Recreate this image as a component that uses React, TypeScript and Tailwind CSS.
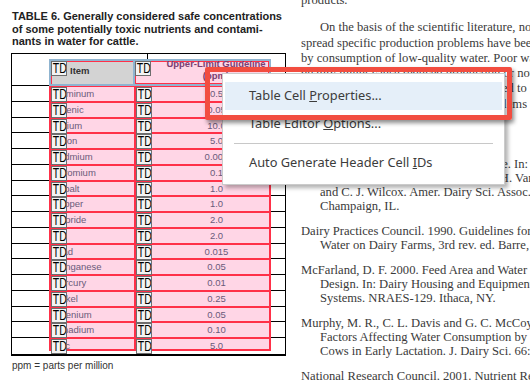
import { Fragment } from 'react'

const items: [string, string][] = [
  ['Aluminum', '0.5'],
  ['Arsenic', '0.05'],
  ['Barium', '10.0'],
  ['Boron', '5.0'],
  ['Cadmium', '0.005'],
  ['Chromium', '0.1'],
  ['Cobalt', '1.0'],
  ['Copper', '1.0'],
  ['Fluoride', '2.0'],
  ['', '2.0'],
  ['Lead', '0.015'],
  ['Manganese', '0.05'],
  ['Mercury', '0.01'],
  ['Nickel', '0.25'],
  ['Selenium', '0.05'],
  ['Vanadium', '0.10'],
  ['Zinc', '5.0'],
]

const paragraph = [
  'On the basis of the scientific literature, no wide-',
  'spread specific production problems have been',
  'by consumption of low-quality water. Poor water',
  'quality might cause reduced production or not',
  'directly, but more research may be needed to mitigate',
  'the effects of water quality on herd problems and',
  'in cattle.',
]

const refs: { first: string; rest: string[] }[] = [
  {
    first: 'Beede, D. K. 1992. Water for dairy cattle. In:',
    rest: ['Large Dairy Herd Management. H. H. Van Horn', 'and C. J. Wilcox. Amer. Dairy Sci. Assoc.', 'Champaign, IL.'],
  },
  {
    first: 'Dairy Practices Council. 1990. Guidelines for',
    rest: ['Water on Dairy Farms, 3rd rev. ed. Barre, VT.'],
  },
  {
    first: 'McFarland, D. F. 2000. Feed Area and Water',
    rest: ['Design. In: Dairy Housing and Equipment', 'Systems. NRAES-129. Ithaca, NY.'],
  },
  {
    first: 'Murphy, M. R., C. L. Davis and G. C. McCoy. 1983.',
    rest: ['Factors Affecting Water Consumption by Holstein', 'Cows in Early Lactation. J. Dairy Sci. 66:35.'],
  },
  {
    first: 'National Research Council. 2001. Nutrient Requirements',
    rest: [],
  },
]

// little "TD" tag badge drawn at the top-left of each tagged cell
function Tag() {
  return (
    <div className="absolute left-0 top-0 z-10 h-[15px] w-[16px] overflow-hidden border border-[#6e6e6e] bg-[#f4f4f4] font-['Liberation_Sans',Arial,sans-serif] text-[14px] font-normal leading-[13px] text-black">
      <span className="inline-block origin-left scale-x-[0.75] pl-px">TD</span>
    </div>
  )
}

export default function App() {
  return (
    <div className="relative flex h-[383px] w-[530px] overflow-hidden bg-white">
      {/* Left column: table */}
      <div className="w-[300px] shrink-0 pl-[11px] pt-[10px] font-['Liberation_Sans',Arial,sans-serif]">
        <h1 className="pl-px text-[11px] font-bold leading-[12.5px] text-[#222]">
          TABLE 6. Generally considered safe concentrations
          <br />
          of some potentially toxic nutrients and contami-
          <br />
          nants in water for cattle.
        </h1>

        <div className="mt-[5.5px] w-[275px] border-x border-t border-b-2 border-black">
          <div className="flex h-[32px] border-b border-black">
            <div className="w-[136px] border-r border-black" />
            <div className="flex-1" />
          </div>
          {items.map((_, i) => (
            <div
              key={i}
              className={`flex h-[15.76px] border-black ${i < items.length - 1 ? 'border-b' : ''}`}
            >
              <div className="w-[136px] border-r border-black" />
              <div className="flex-1" />
            </div>
          ))}
        </div>

        <p className="mt-[4px] pl-px text-[10px] leading-[12px] text-[#333]">ppm = parts per million</p>
      </div>

      {/* Right column: body text */}
      <div className="-mt-[7px] flex-1 whitespace-nowrap pl-px font-['Liberation_Serif','Times_New_Roman',serif] text-[12.6px] text-[#3a3a3a]">
        <div className="leading-[15.3px]">products.</div>
        <div className="mt-[12px] leading-[15.3px]">
          {paragraph.map((line, i) => (
            <div key={i} className={i === 0 ? 'pl-[19px]' : ''}>
              {line}
            </div>
          ))}
        </div>
        <div className="mt-[6.5px] font-bold leading-[14px]">References</div>
        <div className="mt-[9px] flex flex-col gap-[11px] leading-[14px]">
          {refs.map((r, i) => (
            <div key={i}>
              <div>{r.first}</div>
              {r.rest.map((line, j) => (
                <div key={j} className="pl-[19px]">
                  {line}
                </div>
              ))}
            </div>
          ))}
        </div>
      </div>

      {/* Tag overlay: data cells */}
      <div className="absolute left-[49px] top-[85px] grid w-[222px] grid-cols-[85px_1fr] border border-[#ff3048] font-['Liberation_Sans',Arial,sans-serif] text-[9.5px] leading-[13px] text-[#6a5a7a]">
        {items.map(([name, value], i) => {
          const h = i === items.length - 1 ? 'h-[12px]' : 'h-[15.76px]'
          return (
            <Fragment key={i}>
              <div className={`relative ${h} border border-[#ff3048] bg-[#ffd6e6] pl-px`}>
                <Tag />
                {name}
              </div>
              <div className={`relative ${h} border border-[#ff3048] bg-[#ffd6e6] pl-[28px] text-center`}>
                <Tag />
                {value}
              </div>
            </Fragment>
          )
        })}
      </div>

      {/* Tag overlay: header row */}
      <div className="absolute left-[49px] top-[59px] flex h-[27px] w-[222px] border-2 border-[#8fb4d0] font-['Liberation_Sans',Arial,sans-serif] text-[9.5px] font-bold">
        <div className="relative w-[84px] border-r-2 border-[#8fb4d0] bg-[#d3d3d3] pl-[19px] pt-[4px] leading-[12px] text-[#333] shadow-[inset_1px_1px_0_#ff3048]">
          <Tag />
          Item
        </div>
        <div className="relative flex-1 overflow-hidden bg-[#ffd6e6] pl-[28px] text-center leading-[11.5px] text-[#7b3f72] shadow-[inset_0_0_0_1px_#ff3048]">
          <Tag />
          <div className="-mt-[3px]">Upper-Limit Guideline</div>
          <div>(ppm)</div>
        </div>
      </div>

      {/* Context menu */}
      <div className="absolute left-[222px] top-[73px] w-[283px] border border-[#cbcbcb] bg-white px-[2px] pb-[7px] pt-[8px] font-['Noto_Sans',sans-serif] text-[12.8px] text-[#3c3c3c] shadow-[3px_3px_4px_rgba(0,0,0,0.3)]">
        <div className="flex h-[28px] items-center bg-[#e5eff9] pl-[24px]">
          <span>
            Table Cell <span className="underline">P</span>roperties...
          </span>
        </div>
        <div className="flex h-[28px] items-center pl-[24px]">
          <span>
            Table Editor <span className="underline">O</span>ptions...
          </span>
        </div>
        <div className="mx-[9px] my-[5px] h-px bg-[#c8c8c8]" />
        <div className="flex h-[28px] items-center pl-[24px]">
          <span>
            Auto Generate Header Cell <span className="underline">I</span>Ds
          </span>
        </div>
      </div>

      {/* Red callout box */}
      <div className="absolute left-[205px] top-[67px] h-[53px] w-[307px] rounded-[2px] border-[5px] border-[#f24d40] shadow-[2px_3px_4px_rgba(0,0,0,0.45)]" />
    </div>
  )
}
